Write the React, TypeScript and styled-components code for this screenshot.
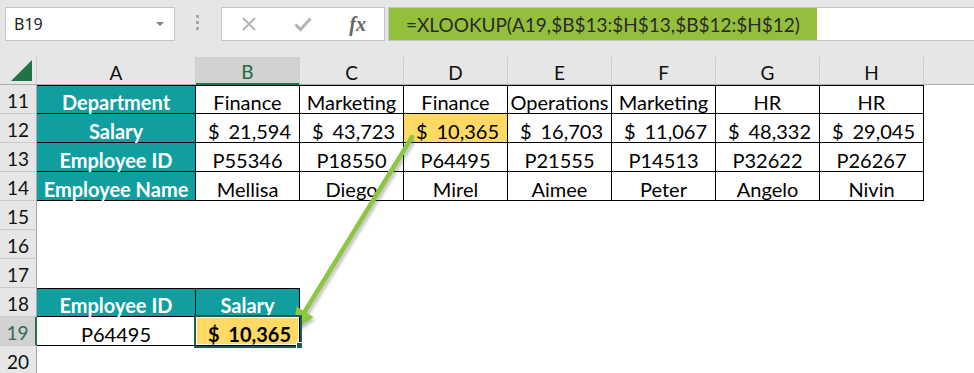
import styled, {createGlobalStyle} from 'styled-components';

const GlobalStyle = createGlobalStyle`
  body {
    margin: 0;
    background: #ffffff;
    font-family: Lato, "Liberation Sans", sans-serif;
  }
`;

type Kind = 'empty' | 'plain' | 'head' | 'hit' | 'pick';

const cols = ['A', 'B', 'C', 'D', 'E', 'F', 'G', 'H'];

const tableRows = [
  {n: 11, label: 'Department', values: ['Finance', 'Marketing', 'Finance', 'Operations', 'Marketing', 'HR', 'HR']},
  {n: 12, label: 'Salary', values: ['21,594', '43,723', '10,365', '16,703', '11,067', '48,332', '29,045'], money: true},
  {n: 13, label: 'Employee ID', values: ['P55346', 'P18550', 'P64495', 'P21555', 'P14513', 'P32622', 'P26267']},
  {n: 14, label: 'Employee Name', values: ['Mellisa', 'Diego', 'Mirel', 'Aimee', 'Peter', 'Angelo', 'Nivin']},
];

export default function App() {
  return (
    <Page>
      <GlobalStyle />
      <Toolbar>
        <NameBox>
          <span>B19</span>
          <Caret />
        </NameBox>
        <Grip>
          <i />
          <i />
          <i />
        </Grip>
        <FormulaButtons>
          <svg width="16" height="16" viewBox="0 0 16 16">
            <path d="M2 2 L14 14 M14 2 L2 14" stroke="#b4b4b4" strokeWidth="2" fill="none" />
          </svg>
          <svg width="18" height="16" viewBox="0 0 18 16">
            <path d="M1.5 8.5 L6.5 13.5 L16.5 2.5" stroke="#b4b4b4" strokeWidth="3" fill="none" />
          </svg>
          <Fx>fx</Fx>
        </FormulaButtons>
        <FormulaBox>
          <FormulaText>=XLOOKUP(A19,$B$13:$H$13,$B$12:$H$12)</FormulaText>
        </FormulaBox>
      </Toolbar>

      <Sheet>
        <Corner>
          <svg width="22" height="21" viewBox="0 0 22 21">
            <polygon points="0,21 21,21 21,0" fill="#217346" />
          </svg>
        </Corner>
        {cols.map((c) => (
          <ColHead key={c} $selected={c === 'B'}>{c}</ColHead>
        ))}
        <ColHead $blank />

        {tableRows.map((r) => (
          <Row key={r.n}>
            <RowHead>{r.n}</RowHead>
            <Cell $kind="head" $top={r.n === 11}>{r.label}</Cell>
            {r.values.map((v, i) => (
              <Cell key={i} $kind={r.money && i === 2 ? 'hit' : 'plain'} $top={r.n === 11}>
                {r.money ? <Money><span>$</span><span>{v}</span></Money> : v}
              </Cell>
            ))}
            <Cell $kind="empty" />
          </Row>
        ))}

        {[15, 16, 17].map((n) => (
          <Row key={n}>
            <RowHead>{n}</RowHead>
            {cols.map((c) => (
              <Cell key={c} $kind="empty" />
            ))}
            <Cell $kind="empty" />
          </Row>
        ))}

        <Row>
          <RowHead>18</RowHead>
          <Cell $kind="head" $top>Employee ID</Cell>
          <Cell $kind="head" $top>Salary</Cell>
          {cols.slice(2).map((c) => (
            <Cell key={c} $kind="empty" />
          ))}
          <Cell $kind="empty" />
        </Row>

        <Row>
          <RowHead $selected>19</RowHead>
          <Cell $kind="plain">P64495</Cell>
          <Cell $kind="pick">
            <Money $bold><span>$</span><span>10,365</span></Money>
            <Handle />
          </Cell>
          {cols.slice(2).map((c) => (
            <Cell key={c} $kind="empty" />
          ))}
          <Cell $kind="empty" />
        </Row>

        <Row>
          <RowHead>20</RowHead>
          {cols.map((c) => (
            <Cell key={c} $kind="empty" />
          ))}
          <Cell $kind="empty" />
        </Row>
      </Sheet>

      <Arrow width="974" height="373" viewBox="0 0 974 373">
        <defs>
          <filter id="sh" x="-20%" y="-20%" width="140%" height="140%">
            <feGaussianBlur stdDeviation="1.6" />
          </filter>
        </defs>
        <g transform="translate(2 3)" opacity="0.35" filter="url(#sh)">
          <line x1="412" y1="137" x2="302" y2="316" stroke="#555" strokeWidth="4.5" />
          <polygon points="293,331 297,307 313,317" fill="#555" />
        </g>
        <line x1="412" y1="137" x2="302" y2="316" stroke="#8dc63f" strokeWidth="4.5" strokeLinecap="round" />
        <polygon points="293,331 296.5,306.5 313.5,317" fill="#8dc63f" />
      </Arrow>
    </Page>
  );
}

const Page = styled.div`
  position: relative;
  width: 974px;
  height: 373px;
  overflow: hidden;
  background: #ffffff;
`;

const Toolbar = styled.div`
  display: flex;
  align-items: flex-start;
  height: 57px;
  padding-top: 7px;
  box-sizing: border-box;
  background: #e6e6e6;
`;

const NameBox = styled.div`
  display: flex;
  align-items: center;
  justify-content: space-between;
  margin-left: 5px;
  width: 170px;
  height: 34px;
  box-sizing: border-box;
  padding: 0 10px 0 8px;
  background: #ffffff;
  border: 1px solid #c6c6c6;
  font-family: "Noto Sans", "Liberation Sans", sans-serif;
  font-size: 16px;
  color: #222;
`;

const Caret = styled.span`
  width: 0;
  height: 0;
  border-left: 4px solid transparent;
  border-right: 4px solid transparent;
  border-top: 4px solid #808080;
`;

const Grip = styled.div`
  display: flex;
  flex-direction: column;
  gap: 3px;
  margin: 8px 0 0 21px;
  i {
    display: block;
    width: 3px;
    height: 3px;
    background: #a6a6a6;
  }
`;

const FormulaButtons = styled.div`
  display: flex;
  align-items: center;
  justify-content: space-between;
  margin-left: 22px;
  width: 164px;
  height: 34px;
  box-sizing: border-box;
  padding: 0 18px 0 19px;
  background: #ffffff;
  border: 1px solid #c6c6c6;
`;

const Fx = styled.span`
  font-family: "Liberation Serif", serif;
  font-style: italic;
  font-weight: 700;
  font-size: 20px;
  color: #666666;
`;

const FormulaBox = styled.div`
  flex: 1;
  margin-left: 3px;
  height: 34px;
  box-sizing: border-box;
  background: #ffffff;
  border: 1px solid #c6c6c6;
  border-right: none;
  display: flex;
`;

const FormulaText = styled.div`
  width: 428px;
  height: 100%;
  box-sizing: border-box;
  padding-left: 17px;
  background: #94bf3c;
  color: #2b2b2b;
  font-size: 19px;
  display: flex;
  align-items: center;
`;

const Sheet = styled.div`
  display: grid;
  grid-template-columns: 37px 159px repeat(7, 104px) 1fr;
  grid-template-rows: 28px repeat(10, 29px);
`;

const Row = styled.div`
  display: contents;
`;

const Corner = styled.div`
  display: flex;
  align-items: flex-end;
  justify-content: flex-end;
  padding: 0 3px 3px 0;
  background: #e6e6e6;
  border-right: 1px solid #cfcfcf;
  border-bottom: 1px solid #ababab;
`;

const ColHead = styled.div<{$selected?: boolean; $blank?: boolean}>`
  display: flex;
  align-items: center;
  justify-content: center;
  box-sizing: border-box;
  padding-top: 3px;
  background: ${(p) => (p.$selected ? '#d2d2d2' : '#e6e6e6')};
  color: ${(p) => (p.$selected ? '#1e6b47' : '#111')};
  font-size: 19px;
  border-right: ${(p) => (p.$blank ? 'none' : '1px solid #cfcfcf')};
  border-bottom: ${(p) => (p.$selected ? '2px solid #217346' : '1px solid #ababab')};
`;

const RowHead = styled.div<{$selected?: boolean}>`
  display: flex;
  align-items: center;
  justify-content: center;
  box-sizing: border-box;
  padding-top: 3px;
  background: ${(p) => (p.$selected ? '#d2d2d2' : '#e6e6e6')};
  color: ${(p) => (p.$selected ? '#2f6b4f' : '#111')};
  font-size: 19px;
  border-bottom: 1px solid #cbcbcb;
  border-right: ${(p) => (p.$selected ? '2px solid #217346' : '1px solid #ababab')};
`;

const fills: Record<Kind, string> = {
  empty: '#ffffff',
  plain: '#ffffff',
  head: '#109e9e',
  hit: '#ffd966',
  pick: '#ffd966',
};

const Cell = styled.div<{$kind: Kind; $top?: boolean}>`
  position: relative;
  display: flex;
  align-items: center;
  justify-content: center;
  box-sizing: border-box;
  padding-top: 5px;
  white-space: nowrap;
  font-size: 20px;
  font-weight: ${(p) => (p.$kind === 'head' ? 700 : 400)};
  color: ${(p) => (p.$kind === 'head' ? '#ffffff' : '#000000')};
  background: ${(p) => fills[p.$kind]};
  border-right: 1px solid ${(p) => (p.$kind === 'empty' ? 'transparent' : '#000')};
  border-bottom: 1px solid ${(p) => (p.$kind === 'empty' ? 'transparent' : '#000')};
  box-shadow: ${(p) =>
    p.$kind === 'pick'
      ? 'inset 0 0 0 1px #fffbe8, 0 0 0 2px #1d5b57'
      : p.$top
        ? 'inset 0 1px 0 #000'
        : 'none'};
  z-index: ${(p) => (p.$kind === 'pick' ? 1 : 0)};
`;

const Money = styled.div<{$bold?: boolean}>`
  display: flex;
  justify-content: space-between;
  width: 100%;
  box-sizing: border-box;
  padding: 0 8px 0 12px;
  font-weight: ${(p) => (p.$bold ? 700 : 400)};
`;

const Handle = styled.span`
  position: absolute;
  right: -4px;
  bottom: -4px;
  width: 5px;
  height: 5px;
  background: #1d5b57;
  border: 1px solid #ffffff;
`;

const Arrow = styled.svg`
  position: absolute;
  left: 0;
  top: 0;
  pointer-events: none;
`;
